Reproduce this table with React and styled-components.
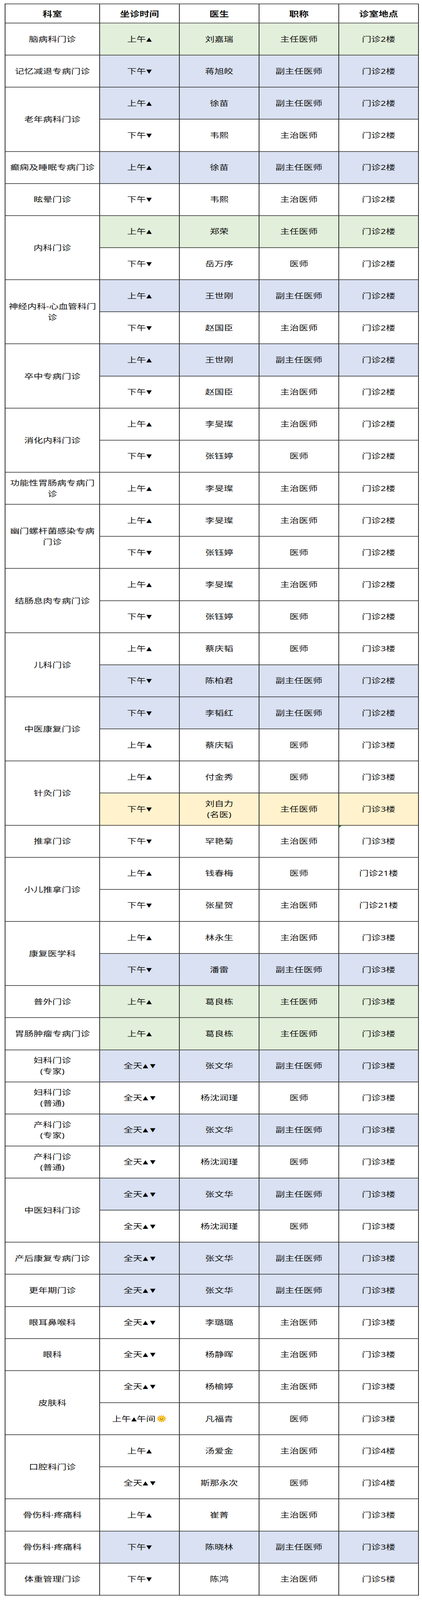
import React, { useState } from 'react';
import styled, { createGlobalStyle } from 'styled-components';

const GlobalStyle = createGlobalStyle`
  html, body {
    margin: 0;
    padding: 0;
    background: #ffffff;
  }
  body {
    font-family: "Noto Sans", "Noto Sans CJK SC", sans-serif;
    color: #111111;
  }
`;

const PAGE_H = 5343;
const LINE = '#2b2b2b';

const tints = {
  green: '#e2efda',
  blue: '#d9e1f2',
  yellow: '#fff2cc',
  none: '#ffffff',
};

// the window may be shorter than the page; the whole sheet is fitted into it
const Frame = styled.div`
  width: 1080px;
  overflow: hidden;
`;

const Page = styled.div`
  width: 1080px;
  height: ${PAGE_H}px;
  box-sizing: border-box;
  padding: 12px 8px 10px 12px;
  transform-origin: 0 0;
`;

const Table = styled.div`
  width: 1060px;
  box-sizing: border-box;
  border-top: 2px solid ${LINE};
  border-left: 2px solid ${LINE};
  display: flex;
  flex-direction: column;
`;

const HeaderRow = styled.div`
  display: grid;
  grid-template-columns: 242px repeat(4, 204px);
  height: 64px;
`;

const HeadCell = styled.div`
  box-sizing: border-box;
  border-right: 2px solid ${LINE};
  border-bottom: 2px solid ${LINE};
  display: flex;
  align-items: center;
  justify-content: center;
  font-size: 25px;
  font-weight: 700;
  color: #111;
`;

const Group = styled.div`
  display: grid;
  grid-template-columns: 242px 816px;
`;

const Dept = styled.div`
  box-sizing: border-box;
  border-right: 2px solid ${LINE};
  border-bottom: 2px solid ${LINE};
  padding: 0 5px;
  display: flex;
  align-items: center;
  justify-content: center;
  text-align: center;
  font-size: 24px;
  line-height: 36px;
  white-space: pre-line;
`;

const SubRows = styled.div`
  display: flex;
  flex-direction: column;
`;

const Row = styled.div`
  display: grid;
  grid-template-columns: repeat(4, 204px);
  height: 107.15px;
  flex-shrink: 0;
  background: ${(p) => tints[p.$tint || 'none']};
`;

const Cell = styled.div`
  position: relative;
  box-sizing: border-box;
  border-right: 2px solid ${LINE};
  border-bottom: 2px solid ${LINE};
  display: flex;
  align-items: center;
  justify-content: center;
  text-align: center;
  font-size: 24px;
  line-height: 36px;
  white-space: pre-line;

  &::before {
    content: '';
    display: ${(p) => (p.$flag ? 'block' : 'none')};
    position: absolute;
    left: 0;
    top: 0;
    width: 0;
    height: 0;
    border-top: 7px solid #1f8a1f;
    border-right: 7px solid transparent;
  }
`;

const TimeText = styled.span`
  display: inline-flex;
  align-items: center;
`;

const Tri = styled.span`
  font-family: "DejaVu Sans", sans-serif;
  font-size: 18px;
  line-height: 1;
  margin-left: ${(p) => (p.$gap ? '5px' : '1px')};
  color: #000;
`;

const Sun = () => (
  <svg width="27" height="27" viewBox="0 0 26 26" style={{ marginLeft: 2 }}>
    <g fill="#f2a20c">
      {Array.from({ length: 12 }).map((_, i) => (
        <polygon
          key={i}
          points="13,0.3 15.2,6 10.8,6"
          transform={`rotate(${i * 30} 13 13)`}
        />
      ))}
    </g>
    <circle cx="13" cy="13" r="8.2" fill="#ffd43b" stroke="#f2a20c" strokeWidth="0.8" />
    <circle cx="10.2" cy="11.5" r="1.1" fill="#6b3e00" />
    <circle cx="15.8" cy="11.5" r="1.1" fill="#6b3e00" />
    <path d="M9.6 14.6 Q13 18 16.4 14.6" fill="none" stroke="#6b3e00" strokeWidth="1.1" strokeLinecap="round" />
  </svg>
);

const Time = ({ kind }) => {
  if (kind === 'am') return <TimeText>上午<Tri>▲</Tri></TimeText>;
  if (kind === 'pm') return <TimeText>下午<Tri>▼</Tri></TimeText>;
  if (kind === 'all') return <TimeText>全天<Tri>▲</Tri><Tri $gap>▼</Tri></TimeText>;
  return (
    <TimeText>
      上午<Tri>▲</Tri>午间<Sun />
    </TimeText>
  );
};

const groups = [
  { dept: '脑病科门诊', rows: [['am', '刘嘉瑞', '主任医师', '门诊2楼', 'green']] },
  { dept: '记忆减退专病门诊', rows: [['pm', '蒋旭皎', '副主任医师', '门诊2楼', 'blue']] },
  {
    dept: '老年病科门诊',
    rows: [
      ['am', '徐苗', '副主任医师', '门诊2楼', 'blue'],
      ['pm', '韦熙', '主治医师', '门诊2楼'],
    ],
  },
  { dept: '癫痫及睡眠专病门诊', rows: [['am', '徐苗', '副主任医师', '门诊2楼', 'blue']] },
  { dept: '眩晕门诊', rows: [['pm', '韦熙', '主治医师', '门诊2楼']] },
  {
    dept: '内科门诊',
    rows: [
      ['am', '郑荣', '主任医师', '门诊2楼', 'green'],
      ['pm', '岳万序', '医师', '门诊2楼'],
    ],
  },
  {
    dept: '神经内科-心血管科门诊',
    rows: [
      ['am', '王世刚', '副主任医师', '门诊2楼', 'blue'],
      ['pm', '赵国臣', '主治医师', '门诊2楼'],
    ],
  },
  {
    dept: '卒中专病门诊',
    rows: [
      ['am', '王世刚', '副主任医师', '门诊2楼', 'blue'],
      ['pm', '赵国臣', '主治医师', '门诊2楼'],
    ],
  },
  {
    dept: '消化内科门诊',
    rows: [
      ['am', '李旻璨', '主治医师', '门诊2楼'],
      ['pm', '张钰婷', '医师', '门诊2楼'],
    ],
  },
  { dept: '功能性胃肠病专病门诊', rows: [['am', '李旻璨', '主治医师', '门诊2楼']] },
  {
    dept: '幽门螺杆菌感染专病门诊',
    rows: [
      ['am', '李旻璨', '主治医师', '门诊2楼'],
      ['pm', '张钰婷', '医师', '门诊2楼'],
    ],
  },
  {
    dept: '结肠息肉专病门诊',
    rows: [
      ['am', '李旻璨', '主治医师', '门诊2楼'],
      ['pm', '张钰婷', '医师', '门诊2楼'],
    ],
  },
  {
    dept: '儿科门诊',
    rows: [
      ['am', '蔡庆韬', '医师', '门诊3楼'],
      ['pm', '陈柏君', '副主任医师', '门诊2楼', 'blue'],
    ],
  },
  {
    dept: '中医康复门诊',
    rows: [
      ['pm', '李韬红', '副主任医师', '门诊2楼', 'blue'],
      ['am', '蔡庆韬', '医师', '门诊3楼'],
    ],
  },
  {
    dept: '针灸门诊',
    rows: [
      ['am', '付金秀', '医师', '门诊3楼'],
      ['pm', '刘自力\n(名医)', '主任医师', '门诊3楼', 'yellow'],
    ],
  },
  { dept: '推拿门诊', rows: [['pm', '罕艳菊', '主治医师', '门诊3楼', null, true]] },
  {
    dept: '小儿推拿门诊',
    rows: [
      ['am', '钱春梅', '医师', '门诊21楼'],
      ['pm', '张星贺', '主治医师', '门诊21楼'],
    ],
  },
  {
    dept: '康复医学科',
    rows: [
      ['am', '林永生', '主治医师', '门诊3楼'],
      ['pm', '潘雷', '副主任医师', '门诊3楼', 'blue'],
    ],
  },
  { dept: '普外门诊', rows: [['am', '葛良栋', '主任医师', '门诊3楼', 'green']] },
  { dept: '胃肠肿瘤专病门诊', rows: [['am', '葛良栋', '主任医师', '门诊3楼', 'green']] },
  { dept: '妇科门诊\n(专家)', rows: [['all', '张文华', '副主任医师', '门诊3楼', 'blue']] },
  { dept: '妇科门诊\n(普通)', rows: [['all', '杨沈润瑾', '医师', '门诊3楼']] },
  { dept: '产科门诊\n(专家)', rows: [['all', '张文华', '副主任医师', '门诊3楼', 'blue']] },
  { dept: '产科门诊\n(普通)', rows: [['all', '杨沈润瑾', '医师', '门诊3楼']] },
  {
    dept: '中医妇科门诊',
    rows: [
      ['all', '张文华', '副主任医师', '门诊3楼', 'blue'],
      ['all', '杨沈润瑾', '医师', '门诊3楼'],
    ],
  },
  { dept: '产后康复专病门诊', rows: [['all', '张文华', '副主任医师', '门诊3楼', 'blue']] },
  { dept: '更年期门诊', rows: [['all', '张文华', '副主任医师', '门诊3楼', 'blue']] },
  { dept: '眼耳鼻喉科', rows: [['all', '李璐璐', '主治医师', '门诊3楼']] },
  { dept: '眼科', rows: [['all', '杨静晖', '主治医师', '门诊3楼']] },
  {
    dept: '皮肤科',
    rows: [
      ['all', '杨榆婷', '主治医师', '门诊3楼'],
      ['noon', '凡福青', '医师', '门诊3楼'],
    ],
  },
  {
    dept: '口腔科门诊',
    rows: [
      ['am', '汤爱金', '主治医师', '门诊4楼'],
      ['all', '斯那永次', '医师', '门诊4楼'],
    ],
  },
  { dept: '骨伤科·疼痛科', rows: [['am', '崔菁', '主治医师', '门诊3楼']] },
  { dept: '骨伤科·疼痛科', rows: [['pm', '陈晓林', '副主任医师', '门诊3楼', 'blue']] },
  { dept: '体重管理门诊', rows: [['pm', '陈鸿', '主治医师', '门诊5楼']] },
];

const heads = ['科室', '坐诊时间', '医生', '职称', '诊室地点'];

const App = () => {
  const [sy] = useState(() =>
    typeof window !== 'undefined' && window.innerHeight < PAGE_H
      ? window.innerHeight / PAGE_H
      : 1
  );

  return (
    <>
      <GlobalStyle />
      <Frame style={{ height: PAGE_H * sy }}>
        <Page style={{ transform: sy < 1 ? `scaleY(${sy})` : undefined }}>
          <Table>
            <HeaderRow>
              {heads.map((h) => (
                <HeadCell key={h}>{h}</HeadCell>
              ))}
            </HeaderRow>
            {groups.map((g, gi) => (
              <Group key={gi}>
                <Dept>{g.dept}</Dept>
                <SubRows>
                  {g.rows.map(([time, doctor, title, room, tint, flag], ri) => (
                    <Row key={ri} $tint={tint}>
                      <Cell>
                        <Time kind={time} />
                      </Cell>
                      <Cell>{doctor}</Cell>
                      <Cell>{title}</Cell>
                      <Cell $flag={flag}>{room}</Cell>
                    </Row>
                  ))}
                </SubRows>
              </Group>
            ))}
          </Table>
        </Page>
      </Frame>
    </>
  );
};

export default App;
